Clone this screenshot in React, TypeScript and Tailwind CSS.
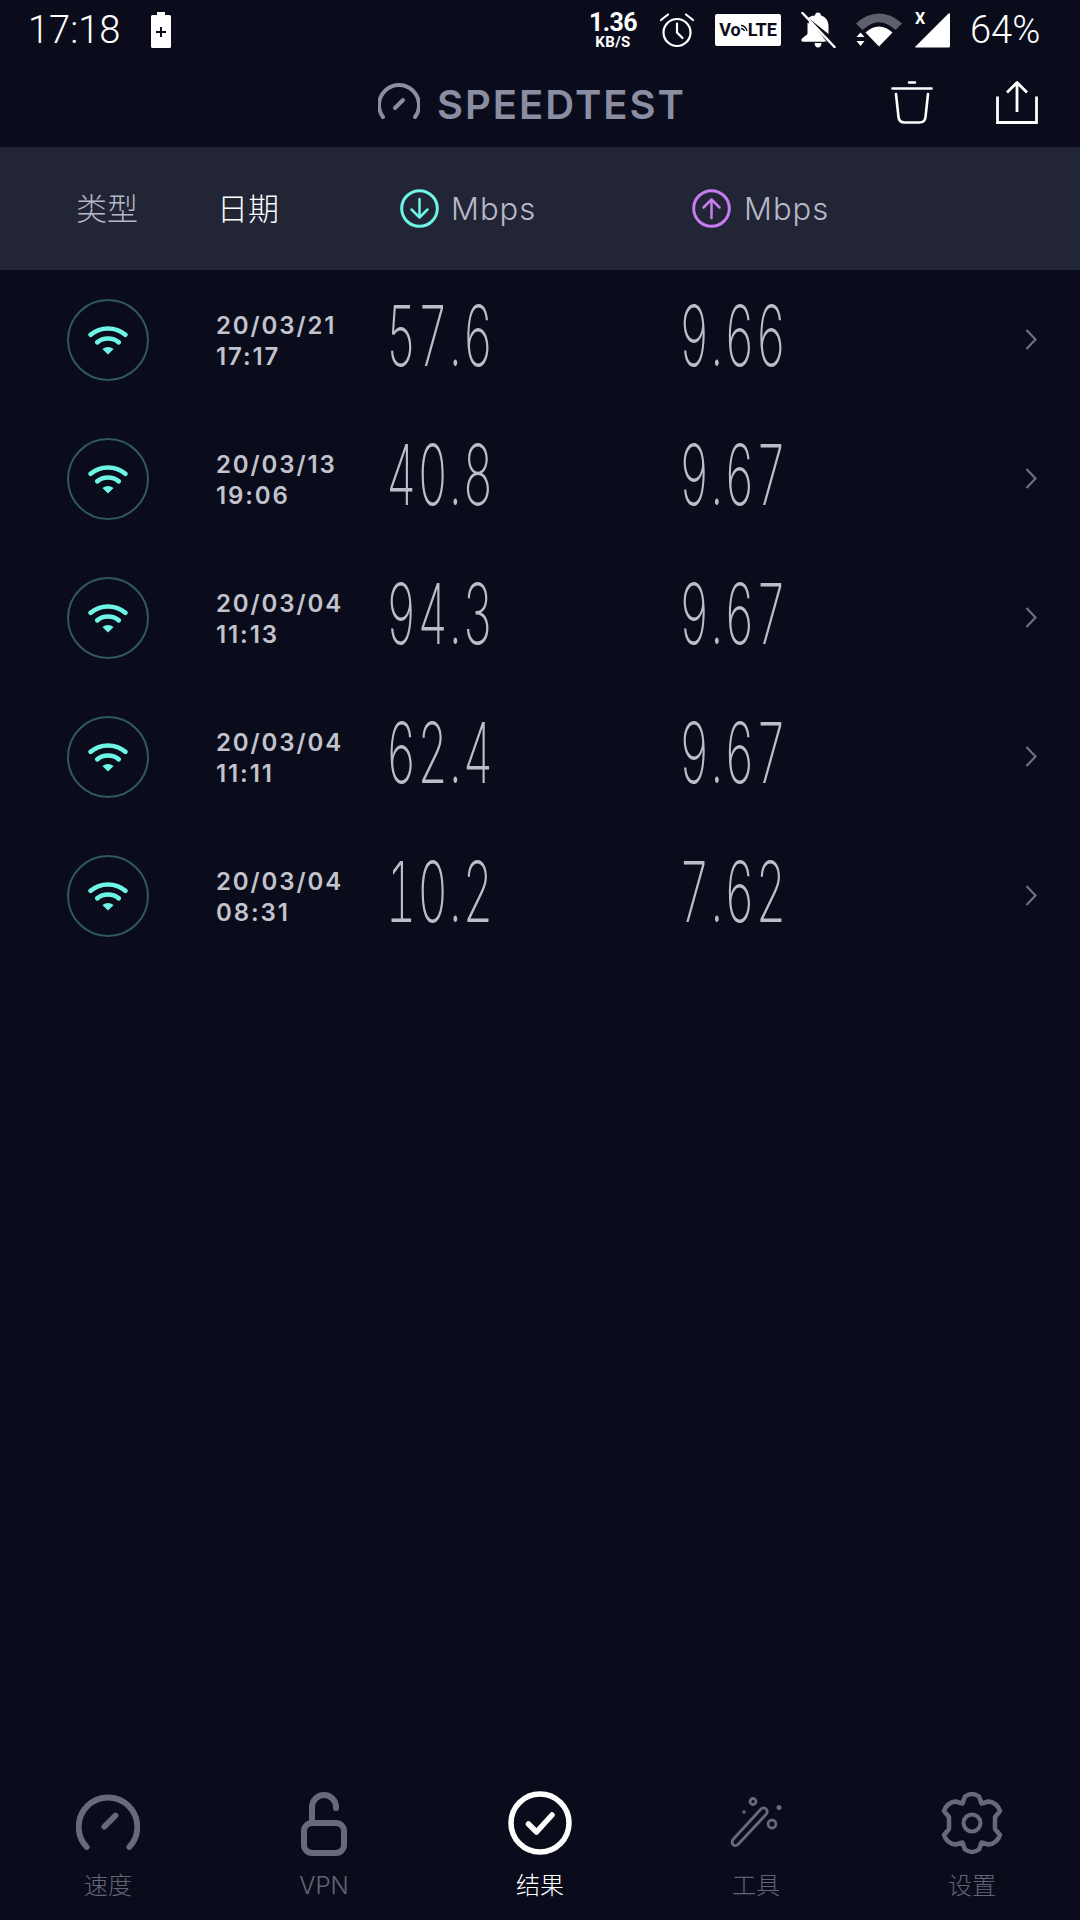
const results = [
  { date: "20/03/21", time: "17:17", down: "57.6", up: "9.66" },
  { date: "20/03/13", time: "19:06", down: "40.8", up: "9.67" },
  { date: "20/03/04", time: "11:13", down: "94.3", up: "9.67" },
  { date: "20/03/04", time: "11:11", down: "62.4", up: "9.67" },
  { date: "20/03/04", time: "08:31", down: "10.2", up: "7.62" },
];

function Gauge({ size, stroke, color }: { size: number; stroke: number; color: string }) {
  return (
    <svg width={size} height={size} viewBox="0 0 60 60" fill="none" stroke={color} strokeLinecap="round">
      <path d="M10 52.5A27.5 27.5 0 1 1 50 52.5" strokeWidth={stroke} />
      <path d="M26.5 33.5L37 23" strokeWidth={stroke} />
    </svg>
  );
}

function Wifi() {
  return (
    <svg width="40" height="30" viewBox="0 0 42 32" fill="none" stroke="#6ef5e6" strokeLinecap="round">
      <path d="M2.5 10.5C13 1.500 29 1.500 39.500 10.500" strokeWidth="5" />
      <path d="M9.500 18.500C16 13 26 13 32.500 18.500" strokeWidth="5" />
      <path d="M15 25.500Q21 21.500 27 25.500L21 31.500Z" fill="#6ef5e6" stroke="none" />
    </svg>
  );
}

function Arrow({ color, up }: { color: string; up?: boolean }) {
  return (
    <svg width="39" height="39" viewBox="0 0 39 39" fill="none" stroke={color} strokeLinecap="round" strokeLinejoin="round">
      <circle cx="19.500" cy="19.500" r="17.800" strokeWidth="3" />
      {up ? (
        <path d="M19.500 29V11M11.500 18.500L19.500 10.500L27.500 18.500" strokeWidth="2.500" />
      ) : (
        <path d="M19.500 10V28M11.500 20.500L19.500 28.500L27.500 20.500" strokeWidth="2.500" />
      )}
    </svg>
  );
}

function StatusBar() {
  return (
    <div className="flex h-[60px] items-center pl-[28px] text-white">
      <span className="w-[123px] font-['Roboto'] text-[38px] font-light leading-none">17:18</span>
      <svg width="20" height="36" viewBox="0 0 20 36" fill="#fff">
        <path d="M6 0H14V3H18.500Q20 3 20 4.500V34.500Q20 36 18.500 36H1.500Q0 36 0 34.500V4.500Q0 3 1.500 3H6Z" />
        <path d="M9 15H11V19H15V21H11V25H9V21H5V19H9Z" fill="#0a0c1b" />
      </svg>
      <div className="ml-[418px] flex w-[48px] flex-col items-center font-['Roboto'] font-bold">
        <span className="text-[25px] leading-[25px] tracking-tight">1.36</span>
        <span className="text-[15px] leading-[15px] tracking-wide">KB/S</span>
      </div>
      <svg className="ml-[22px]" width="36" height="36" viewBox="0 0 36 36" fill="none" stroke="#fff" strokeWidth="2.200" strokeLinecap="round">
        <circle cx="18" cy="20.500" r="13.500" />
        <path d="M18 11.500V20.500L23.500 26M2 8L9 2.500M34 8L27 2.500" />
      </svg>
      <div className="ml-[20px] flex h-[32px] w-[66px] items-center justify-center rounded-[2px] bg-white font-['Roboto'] text-[18px] font-bold leading-none text-[#0a0c1b]">
        <span>Vo</span>
        <svg className="mb-[6px]" width="7" height="9" viewBox="0 0 7 9" fill="none" stroke="#0a0c1b" strokeWidth="1.300">
          <path d="M0 2.500Q4.500 2.500 6 8M0 5.500Q2.500 5.500 3.500 8" />
        </svg>
        <span>LTE</span>
      </div>
      <svg className="ml-[20px]" width="35" height="36" viewBox="0 0 35 36" fill="#fff">
        <path d="M17 0.500C19 0.500 20 2 20 3.500C25 5 27.500 9 27.500 14V22L5.500 4.500L8.500 7L7 14V22L2.500 27V29.500H25.500L7 6C9 4.500 11 3.500 14 3.500C14 2 15 0.500 17 0.500Z" />
        <path d="M6.500 10.500L23.500 29.500H0.500V27L6.500 22Z" />
        <path d="M13.500 31H20.500Q20 35.500 17 35.500Q14 35.500 13.500 31Z" />
        <path d="M1.500 1L33.500 35" stroke="#fff" strokeWidth="2.500" strokeLinecap="round" />
      </svg>
      <svg className="ml-[20px]" width="46" height="34" viewBox="0 0 46 34">
        <path d="M0 10.500C14 -3 32 -3 46 10.500L39.500 17C28.500 6.500 17.500 6.500 6.500 17Z" fill="#5f606c" />
        <path d="M9.500 19.500C18 11.500 28 11.500 36.500 19.500L23 33.500Z" fill="#fff" />
        <path d="M0.500 24L4.500 19.500L8.500 24ZM0.500 28H8.500L4.500 33Z" fill="#fff" />
      </svg>
      <div className="relative ml-[13px] h-[36px] w-[35px]">
        <svg width="35" height="36" viewBox="0 0 35 36" fill="#fff">
          <path d="M0 35L33.500 1.500Q35 0.500 35 2.500V34Q35 35.500 33.500 35.500H0.500Z" />
        </svg>
        <span className="absolute left-0 top-[-1px] font-['Roboto'] text-[16px] font-bold leading-none">X</span>
      </div>
      <span className="ml-[20px] font-['Roboto'] text-[38px] font-light leading-none">64%</span>
    </div>
  );
}

function AppHeader() {
  return (
    <div className="flex h-[87px] items-center pl-[378px]">
      <svg className="mb-[3px]" width="42" height="38" viewBox="0 0 42 38" fill="none" stroke="#8b8da2" strokeLinecap="round" strokeWidth="4">
        <path d="M5 34A20 20 0 1 1 37 34" />
        <path d="M17 25L25 17" />
      </svg>
      <span className="ml-[17px] mt-[3px] w-[454px] text-[40px] font-semibold leading-none tracking-[2px] text-[#8b8da2]">SPEEDTEST</span>
      <svg className="mt-[-2px]" width="42" height="43" viewBox="0 0 42 43" fill="none" stroke="#fff" strokeWidth="2.600" strokeLinecap="round">
        <path d="M1.500 7.500H40.500M18 1.500H24" />
        <path d="M5 13L7.500 36Q8 41.500 13.500 41.500H28.500Q34 41.500 34.500 36L37 13" />
      </svg>
      <svg className="ml-[63px] mt-[-2px]" width="42" height="43" viewBox="0 0 42 43" fill="none" stroke="#fff" strokeWidth="2.800">
        <path d="M21 2V31M11 11.500L21 1.500L31 11.500" strokeLinejoin="round" />
        <path d="M1.500 15.500V41.500H40.500V15.500" />
      </svg>
    </div>
  );
}

function ColumnHeader() {
  return (
    <div className="flex h-[123px] items-center bg-[#212536] pl-[76px] text-[31px] font-light leading-none">
      <span className="w-[141px] text-[#b7b9c6]">类型</span>
      <span className="w-[183px] text-white">日期</span>
      <div className="flex w-[292px] items-center gap-[12px] text-[#b7b9c6]">
        <Arrow color="#6ef5e6" />
        <span className="tracking-[1px]">Mbps</span>
      </div>
      <div className="flex items-center gap-[13px] text-[#b7b9c6]">
        <Arrow color="#c77cf0" up />
        <span className="tracking-[1px]">Mbps</span>
      </div>
    </div>
  );
}

function Speed({ value }: { value: string }) {
  return (
    <span className="mb-[8px] ml-[-2px] inline-block origin-left scale-x-[0.56] text-[84px] font-extralight tabular-nums leading-none tracking-[2px] text-[#bcbdc9]">
      {value}
    </span>
  );
}

function ResultRow({ date, time, down, up }: (typeof results)[number]) {
  return (
    <div className="flex h-[139px] items-center pl-[67px]">
      <div className="flex h-[82px] w-[82px] items-center justify-center rounded-full border-2 border-[#2f5860]">
        <Wifi />
      </div>
      <div className="ml-[67px] mt-[2px] flex w-[172px] flex-col text-[24px] font-semibold leading-[31px] tracking-[1.9px] text-[#c3c3cd]">
        <span>{date}</span>
        <span>{time}</span>
      </div>
      <div className="flex w-[293px] items-center">
        <Speed value={down} />
      </div>
      <div className="flex w-[344px] items-center">
        <Speed value={up} />
      </div>
      <svg width="12" height="23" viewBox="0 0 12 23" fill="none" stroke="#6d7080" strokeWidth="2.200">
        <path d="M1.500 2L10.500 11.500L1.500 21" />
      </svg>
    </div>
  );
}

function NavItem({ label, active, children }: { label: string; active?: boolean; children: React.ReactNode }) {
  return (
    <div className="flex flex-col items-center">
      <div className="flex h-[66px] items-center justify-center">{children}</div>
      <span className={`mt-[15px] text-[24px] font-light leading-[30px] ${active ? "text-white" : "text-[#626576]"}`}>{label}</span>
    </div>
  );
}

function BottomNav() {
  const grey = "#676a7c";
  return (
    <div className="grid h-[130px] grid-cols-5">
      <NavItem label="速度">
        <Gauge size={64} stroke={5.500} color={grey} />
      </NavItem>
      <NavItem label="VPN">
        <svg className="mt-[2px]" width="46" height="64" viewBox="0 0 46 64" fill="none" stroke={grey} strokeWidth="6" strokeLinecap="round">
          <rect x="3" y="31" width="40" height="30" rx="8" />
          <path d="M11 30V15A12 12 0 0 1 35 15V16" />
        </svg>
      </NavItem>
      <NavItem label="结果" active>
        <svg width="64" height="64" viewBox="0 0 64 64" fill="none" stroke="#fff" strokeLinecap="round" strokeLinejoin="round">
          <circle cx="32" cy="32" r="29" strokeWidth="5.500" />
          <path d="M20.500 33L28.500 41L44 24" strokeWidth="5.500" />
        </svg>
      </NavItem>
      <NavItem label="工具">
        <svg width="52" height="52" viewBox="0 0 52 52" fill="none" stroke={grey} strokeWidth="2.800">
          <path d="M3 42.500L30.500 12.500Q33.500 9.500 36 12Q38.500 14.500 36 17.500L8 47.500Q5.500 49.500 3.500 48Q1 46 3 42.500Z" />
          <circle cx="23" cy="4.500" r="3" />
          <circle cx="42" cy="27" r="4" />
          <circle cx="49" cy="10.500" r="2.500" fill={grey} stroke="none" />
          <circle cx="14" cy="15" r="1.700" fill={grey} stroke="none" />
        </svg>
      </NavItem>
      <NavItem label="设置">
        <svg width="64" height="64" viewBox="0 0 64 64" fill="none" stroke={grey} strokeWidth="4.500" strokeLinejoin="round">
          <path d="M25 5.500Q32 0.500 39 5.500L41.500 12.500L48.500 10.500Q57 11.500 60 20L55 26V38L60 44Q57 52.500 48.500 53.500L41.500 51.500L39 58.500Q32 63.500 25 58.500L22.500 51.500L15.500 53.500Q7 52.500 4 44L9 38V26L4 20Q7 11.500 15.500 10.500L22.500 12.500Z" />
          <circle cx="32" cy="32" r="8.500" strokeWidth="4" />
        </svg>
      </NavItem>
    </div>
  );
}

export default function App() {
  return (
    <div className="flex h-[1920px] w-[1080px] flex-col overflow-hidden bg-[#0a0c1b] font-['Inter','Noto_Sans_CJK_SC',sans-serif]">
      <StatusBar />
      <AppHeader />
      <ColumnHeader />
      <div className="flex-1">
        {results.map((r) => (
          <ResultRow key={r.date + r.time} {...r} />
        ))}
      </div>
      <BottomNav />
    </div>
  );
}
